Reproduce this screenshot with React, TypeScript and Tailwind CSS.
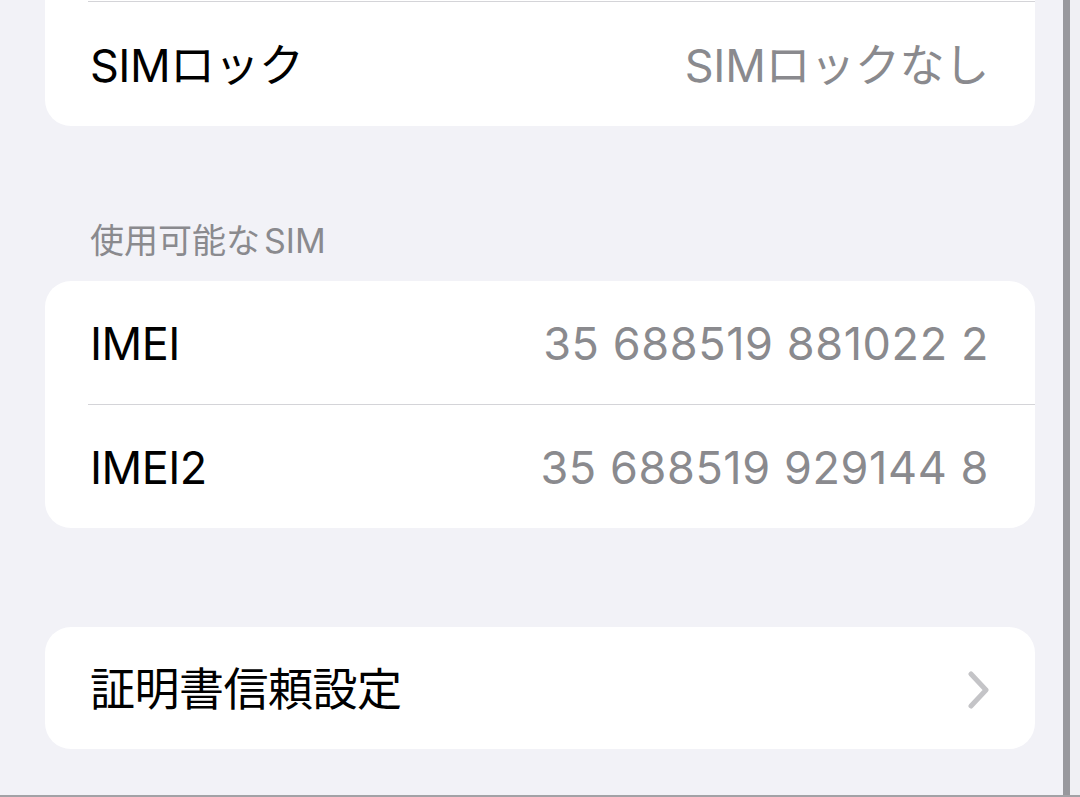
import React from 'react';

const font = { fontFamily: 'Inter, "Noto Sans CJK JP", sans-serif' };

function Row({ label, value, chevron, h = 'h-[123px]', mono }: { label: string; value?: string; chevron?: boolean; h?: string; mono?: boolean }) {
  return (
    <div className={`flex ${h} items-center justify-between pl-[45px] pr-[46px] pt-[3px]`}>
      <span className="text-[45px] tracking-[-0.5px] text-black">{label}</span>
      {value && (
        <span className={`text-[45px] text-[#8a8a8e] ${mono ? 'tracking-[0.6px]' : 'tracking-[-0.3px]'}`}>{value}</span>
      )}
      {chevron && (
        <svg width="24" height="38" viewBox="0 0 24 38" className="mr-[-2px]">
          <path d="M4 3 L19 19 L4 35" fill="none" stroke="#c4c4c7" strokeWidth="5" strokeLinecap="round" strokeLinejoin="round" />
        </svg>
      )}
    </div>
  );
}

function Separator() {
  return <div className="ml-[43px] h-px bg-[#d4d4d8]" />;
}

export default function App() {
  return (
    <div className="flex h-[797px] w-[1080px] flex-col bg-[#f2f2f7]" style={font}>
      <div className="flex flex-1 overflow-hidden">
        <div className="w-[1063px] pl-[45px] pr-[28px]">
          {/* carrier lock, top of list scrolled off */}
          <div className="overflow-hidden rounded-b-[26px] bg-white">
            <div className="h-px" />
            <Separator />
            <Row label="SIMロック" value="SIMロックなし" h="h-[124px]" />
          </div>

          <div className="pb-[23px] pl-[45px] pt-[98px] text-[34px] leading-[34px] text-[#8a8a8e]">
            使用可能な<span className="ml-[4px]">SIM</span>
          </div>

          <div className="overflow-hidden rounded-[26px] bg-white">
            <Row label="IMEI" value="35 688519 881022 2" mono />
            <Separator />
            <Row label="IMEI2" value="35 688519 929144 8" mono />
          </div>

          <div className="mt-[99px] overflow-hidden rounded-[26px] bg-white">
            <Row label="証明書信頼設定" chevron h="h-[122px]" />
          </div>
        </div>
        <div className="w-[7px] bg-[#98989d]" />
        <div className="flex-1 bg-[#f0f0f4]" />
      </div>
      <div className="h-[2px] bg-[#a2a2a6]" />
    </div>
  );
}
